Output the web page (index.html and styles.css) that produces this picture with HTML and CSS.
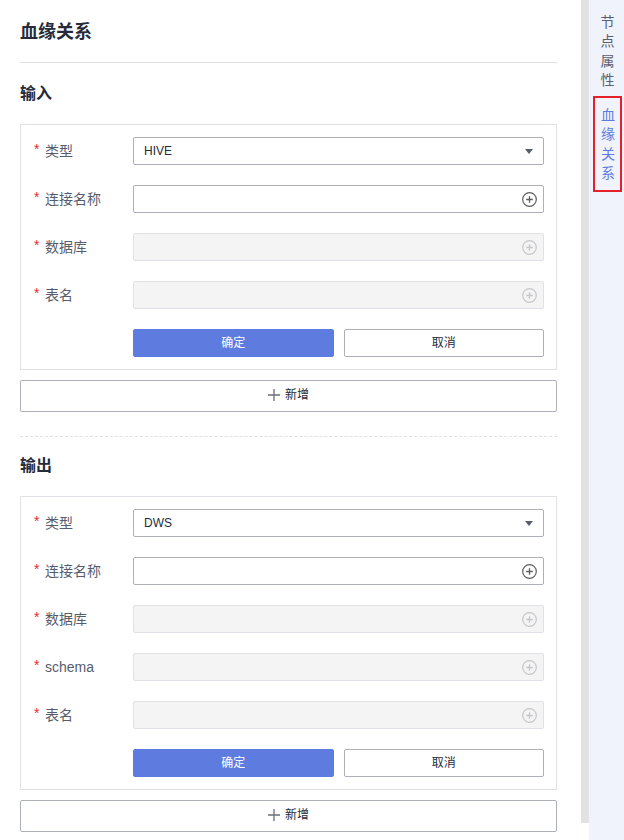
FILE: index.html
```html
<!DOCTYPE html>
<html lang="zh-CN">
<head>
  <meta charset="UTF-8">
  <meta name="viewport" content="width=device-width, initial-scale=1.0">
  <title>血缘关系</title>
  <link rel="stylesheet" href="styles.css">
</head>
<body>
  <div class="page">
    <div class="main">
      <h2 class="title">血缘关系</h2>

      <section class="section first">
        <h3 class="section-title">输入</h3>
        <div class="card">
          <div class="row">
            <label class="label"><span class="req">*</span>类型</label>
            <div class="field select">HIVE<span class="caret"></span></div>
          </div>
          <div class="row">
            <label class="label"><span class="req">*</span>连接名称</label>
            <div class="field">
              <svg class="plus-circle" width="15" height="15" viewBox="0 0 15 15"><circle cx="7.5" cy="7.5" r="6.8" fill="none" stroke="currentColor" stroke-width="1.2"/><path d="M7.5 4.2v6.6M4.2 7.5h6.6" stroke="currentColor" stroke-width="1.3"/></svg>
            </div>
          </div>
          <div class="row">
            <label class="label"><span class="req">*</span>数据库</label>
            <div class="field disabled">
              <svg class="plus-circle" width="15" height="15" viewBox="0 0 15 15"><circle cx="7.5" cy="7.5" r="6.8" fill="none" stroke="currentColor" stroke-width="1.2"/><path d="M7.5 4.2v6.6M4.2 7.5h6.6" stroke="currentColor" stroke-width="1.3"/></svg>
            </div>
          </div>
          <div class="row">
            <label class="label"><span class="req">*</span>表名</label>
            <div class="field disabled">
              <svg class="plus-circle" width="15" height="15" viewBox="0 0 15 15"><circle cx="7.5" cy="7.5" r="6.8" fill="none" stroke="currentColor" stroke-width="1.2"/><path d="M7.5 4.2v6.6M4.2 7.5h6.6" stroke="currentColor" stroke-width="1.3"/></svg>
            </div>
          </div>
          <div class="row">
            <div class="label"></div>
            <div class="actions">
              <button class="btn primary">确定</button>
              <button class="btn">取消</button>
            </div>
          </div>
        </div>
        <button class="add-btn">
          <svg width="12" height="12" viewBox="0 0 12 12"><path d="M6 0v12M0 6h12" stroke="currentColor" stroke-width="1.3"/></svg>
          新增
        </button>
      </section>

      <div class="dashed"></div>

      <section class="section">
        <h3 class="section-title">输出</h3>
        <div class="card">
          <div class="row">
            <label class="label"><span class="req">*</span>类型</label>
            <div class="field select">DWS<span class="caret"></span></div>
          </div>
          <div class="row">
            <label class="label"><span class="req">*</span>连接名称</label>
            <div class="field">
              <svg class="plus-circle" width="15" height="15" viewBox="0 0 15 15"><circle cx="7.5" cy="7.5" r="6.8" fill="none" stroke="currentColor" stroke-width="1.2"/><path d="M7.5 4.2v6.6M4.2 7.5h6.6" stroke="currentColor" stroke-width="1.3"/></svg>
            </div>
          </div>
          <div class="row">
            <label class="label"><span class="req">*</span>数据库</label>
            <div class="field disabled">
              <svg class="plus-circle" width="15" height="15" viewBox="0 0 15 15"><circle cx="7.5" cy="7.5" r="6.8" fill="none" stroke="currentColor" stroke-width="1.2"/><path d="M7.5 4.2v6.6M4.2 7.5h6.6" stroke="currentColor" stroke-width="1.3"/></svg>
            </div>
          </div>
          <div class="row">
            <label class="label"><span class="req">*</span>schema</label>
            <div class="field disabled">
              <svg class="plus-circle" width="15" height="15" viewBox="0 0 15 15"><circle cx="7.5" cy="7.5" r="6.8" fill="none" stroke="currentColor" stroke-width="1.2"/><path d="M7.5 4.2v6.6M4.2 7.5h6.6" stroke="currentColor" stroke-width="1.3"/></svg>
            </div>
          </div>
          <div class="row">
            <label class="label"><span class="req">*</span>表名</label>
            <div class="field disabled">
              <svg class="plus-circle" width="15" height="15" viewBox="0 0 15 15"><circle cx="7.5" cy="7.5" r="6.8" fill="none" stroke="currentColor" stroke-width="1.2"/><path d="M7.5 4.2v6.6M4.2 7.5h6.6" stroke="currentColor" stroke-width="1.3"/></svg>
            </div>
          </div>
          <div class="row">
            <div class="label"></div>
            <div class="actions">
              <button class="btn primary">确定</button>
              <button class="btn">取消</button>
            </div>
          </div>
        </div>
        <button class="add-btn">
          <svg width="12" height="12" viewBox="0 0 12 12"><path d="M6 0v12M0 6h12" stroke="currentColor" stroke-width="1.3"/></svg>
          新增
        </button>
      </section>
    </div>

    <div class="scrollbar"></div>

    <aside class="side">
      <div class="tab">节点属性</div>
      <div class="tab active">血缘关系</div>
    </aside>
  </div>
</body>
</html>
```

FILE: styles.css
```css
* {
  box-sizing: border-box;
}
body {
  margin: 0;
  background: #fff;
  font-family: "Liberation Sans", "Noto Sans CJK SC", sans-serif;
  color: #252b3a;
}
.page {
  display: flex;
  height: 840px;
  overflow: hidden;
}
.main {
  width: 581px;
  flex-shrink: 0;
  padding: 20px 24px 0 20px;
}
.title {
  margin: 0;
  font-size: 18px;
  line-height: 24px;
  font-weight: bold;
  padding-bottom: 18px;
  border-bottom: 1px solid #dfe1e6;
}
.section-title {
  margin: 0 0 19px;
  font-size: 16px;
  line-height: 22px;
  font-weight: bold;
}
.section {
  margin-top: 18px;
}
.section.first {
  margin-top: 20px;
}
.card {
  border: 1px solid #dfe1e6;
  padding: 12px;
  display: flex;
  flex-direction: column;
  gap: 20px;
}
.row {
  display: flex;
  align-items: center;
  height: 28px;
}
.label {
  width: 100px;
  flex-shrink: 0;
  font-size: 14px;
  line-height: 20px;
  color: #575d6c;
  display: flex;
  align-items: center;
}
.req {
  color: #f5222d;
  font-size: 14px;
  width: 12px;
  padding-left: 1px;
  align-self: flex-start;
  margin-top: -2px;
}
.field {
  flex: 1;
  height: 28px;
  border: 1px solid #adb0b8;
  border-radius: 2px;
  display: flex;
  align-items: center;
  justify-content: space-between;
  padding: 0 6px 0 10px;
  font-size: 12px;
  color: #252b3a;
  background: #fff;
}
.field.select {
  padding-right: 10px;
}
.field .plus-circle {
  margin-left: auto;
  color: #5e5e5e;
}
.field.disabled {
  background: #f4f4f5;
  border-color: #dfe1e6;
}
.field.disabled .plus-circle {
  color: #c6c7ca;
}
.caret {
  width: 0;
  height: 0;
  border-left: 4.5px solid transparent;
  border-right: 4.5px solid transparent;
  border-top: 5px solid #575d6c;
}
.actions {
  flex: 1;
  display: flex;
  gap: 10px;
  height: 28px;
}
.btn {
  flex: 1;
  height: 28px;
  border: 1px solid #adb0b8;
  border-radius: 2px;
  background: #fff;
  color: #252b3a;
  font-family: inherit;
  font-size: 12px;
  line-height: 16px;
  padding: 0 0 1px;
}
.btn.primary {
  background: #5e7ce0;
  border-color: #5e7ce0;
  color: #fff;
}
.add-btn {
  width: 100%;
  height: 32px;
  margin-top: 10px;
  border: 1px solid #adb0b8;
  border-radius: 2px;
  background: #fff;
  color: #252b3a;
  font-family: inherit;
  font-size: 12px;
  line-height: 16px;
  display: flex;
  align-items: center;
  justify-content: center;
  gap: 5px;
  padding: 0 0 2px;
}
.add-btn svg {
  color: #6b6f7a;
}
.dashed {
  margin-top: 24px;
  border-top: 1px dashed #dfe1e6;
}
.scrollbar {
  width: 8px;
  height: 823px;
  flex-shrink: 0;
  background: #e2e2e2;
}
.side {
  flex: 1;
  background: #f0f3fc;
  padding-top: 13px;
}
.tab {
  width: 29px;
  margin-left: 4px;
  font-size: 14px;
  line-height: 19.3px;
  color: #5a5f6e;
  text-align: center;
  padding: 0 7px;
  word-break: break-all;
}
.tab.active {
  margin-top: 6px;
  color: #5e7ce0;
  border: 2px solid #e5202a;
  padding: 8px 6px 7px;
}
```
